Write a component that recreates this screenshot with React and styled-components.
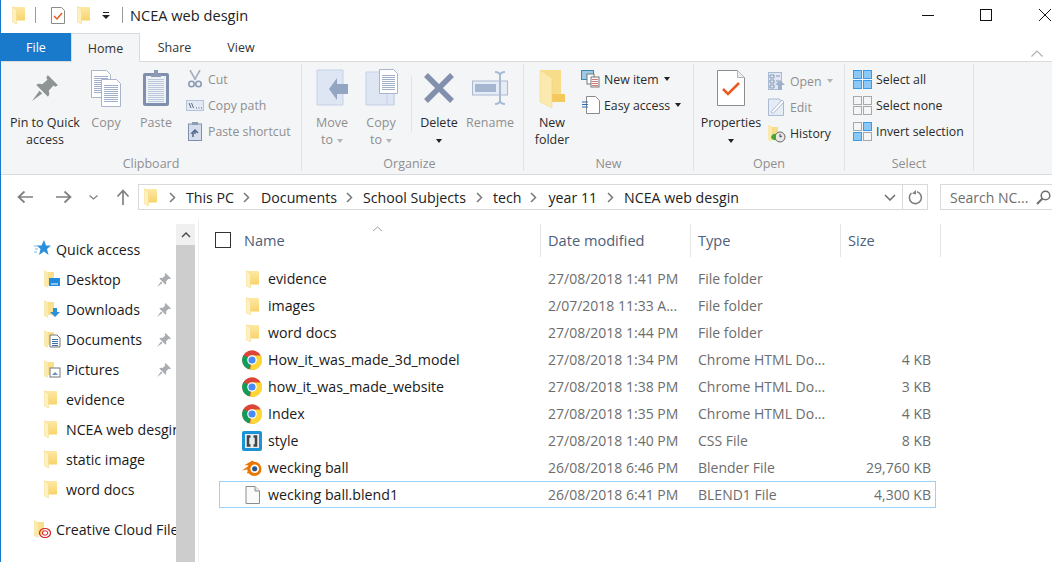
import React from 'react';
import styled, { createGlobalStyle } from 'styled-components';

const GlobalStyle = createGlobalStyle`
  html, body { margin: 0; padding: 0; background: #fff; }
  body { font-family: "Open Sans", "Noto Sans", sans-serif; }
  * { box-sizing: border-box; }
`;

const Win = styled.div`
  width: 1052px;
  height: 562px;
  overflow: hidden;
  border-left: 1px solid #1979ca;
  display: flex;
  flex-direction: column;
  color: #1a1a1a;
  font-size: 13.5px;
`;

const TitleBar = styled.div`
  height: 33px;
  display: flex;
  align-items: center;
  padding-left: 11px;
  padding-bottom: 3px;
  flex: none;
`;
const TitleSep = styled.div`
  width: 1px;
  height: 16px;
  background: #9a9a9a;
  margin: 0 ${p => p.$gap || 14}px;
`;
const TitleGap = styled.span`
  width: ${p => p.$w}px;
  flex: none;
`;
const TitleText = styled.div`
  font-size: 14.6px;
  color: #222;
  margin-left: -5px;
  flex: 1;
`;
const WinBtns = styled.div`
  display: flex;
  align-items: center;
  width: 131px;
  gap: 46px;
  margin-right: -1px;
  flex: none;
  svg:last-child { margin-left: 1px; }
`;

const Tabs = styled.div`
  height: 28px;
  display: flex;
  flex: none;
  position: relative;
  align-items: stretch;
`;
const Tab = styled.div`
  width: ${p => p.$w}px;
  display: flex;
  align-items: center;
  justify-content: center;
  font-size: 12.5px;
  padding-top: 1px;
  color: ${p => (p.$file ? '#fff' : '#333')};
  background: ${p => (p.$file ? '#1979ca' : p.$active ? '#f4f5f7' : 'transparent')};
  border: ${p => (p.$active ? '1px solid #dadbdc' : 'none')};
  border-bottom: none;
  margin-bottom: ${p => (p.$active ? '-1px' : '0')};
  z-index: 1;
`;
const Collapse = styled.div`
  position: absolute;
  right: 9px;
  top: 10px;
`;

const Ribbon = styled.div`
  height: 114px;
  flex: none;
  background: #f4f5f7;
  border-top: 1px solid #dadbdc;
  border-bottom: 1px solid #dadbdc;
  display: flex;
  padding-top: 2px;
`;
const Group = styled.div`
  width: ${p => p.$w}px;
  height: 107px;
  border-right: 1px solid #e1e3e6;
  display: flex;
  flex-direction: column;
  padding-left: ${p => p.$pad || 0}px;
`;
const GroupBody = styled.div`
  flex: 1;
  display: flex;
  align-items: flex-start;
  padding-top: 2px;
`;
const GroupLabel = styled.div`
  height: 16px;
  text-align: center;
  font-size: 12.5px;
  color: #8f8f8f;
  margin-left: -${p => p.$pad || 0}px;
  line-height: 17px;
  padding-right: ${p => p.$shift || 0}px;
`;
const Large = styled.div`
  width: ${p => p.$w}px;
  display: flex;
  flex-direction: column;
  align-items: center;
  flex: none;
  font-size: 12.5px;
  line-height: 17px;
  text-align: center;
  margin-left: ${p => p.$ml || 0}px;
  color: ${p => (p.$off ? '#8f8f8f' : '#2b2b2b')};
  white-space: nowrap;
`;
const LargeIcon = styled.div`
  height: 44px;
  margin-bottom: 4px;
  display: flex;
  align-items: center;
  justify-content: center;
`;
const LargeText = styled.div`
  text-align: center;
`;
const Caret = styled.span`
  display: inline-block;
  width: 0;
  height: 0;
  vertical-align: middle;
  margin-left: ${p => p.$ml ?? 4}px;
  border-left: 3.5px solid transparent;
  border-right: 3.5px solid transparent;
  border-top: 4px solid ${p => (p.$off ? '#b5b5b5' : '#222')};
`;
const VSep = styled.div`
  width: 1px;
  height: 56px;
  margin: 10px 0 0 5px;
  background: #e1e3e6;
  flex: none;
`;
const SmallCol = styled.div`
  display: flex;
  flex-direction: column;
  flex: none;
  margin-left: ${p => p.$ml || 0}px;
  padding-top: ${p => p.$pt || 0}px;
`;
const Small = styled.div`
  height: 26px;
  display: flex;
  align-items: center;
  gap: 4px;
  font-size: 12.3px;
  white-space: nowrap;
  color: ${p => (p.$off ? '#8f8f8f' : '#2b2b2b')};
`;
const SmallIcon = styled.span`
  width: 19px;
  height: 20px;
  display: flex;
  align-items: center;
  justify-content: center;
  flex: none;
`;

const AddressRow = styled.div`
  height: 44px;
  flex: none;
  display: flex;
  align-items: center;
  padding-left: 16px;
  color: #808080;
`;
const NavBtn = styled.div`
  width: ${p => p.$w}px;
  display: flex;
  align-items: center;
  flex: none;
`;
const AddressBox = styled.div`
  width: 790px;
  height: 26px;
  border: 1px solid #d9d9d9;
  display: flex;
  align-items: center;
  flex: none;
  padding-left: 5px;
  color: #222;
  font-size: 14.2px;
`;
const Crumb = styled.span`
  white-space: nowrap;
  margin-left: ${p => p.$ml}px;
`;
const Chev = styled.span`
  display: flex;
  margin-left: ${p => p.$ml}px;
`;
const AddrEnd = styled.div`
  margin-left: auto;
  display: flex;
  align-items: center;
  height: 100%;
  gap: 6px;
`;
const Refresh = styled.div`
  width: 25px;
  height: 100%;
  border-left: 1px solid #d9d9d9;
  display: flex;
  align-items: center;
  justify-content: center;
`;
const SearchBox = styled.div`
  flex: none;
  margin-left: 12px;
  width: 130px;
  height: 26px;
  border: 1px solid #d9d9d9;
  display: flex;
  align-items: center;
  padding-left: 9px;
  gap: 8px;
  font-size: 14px;
  color: #6d6d6d;
  white-space: nowrap;
  svg { flex: none; }
`;

const Main = styled.div`
  flex: 1;
  min-height: 0;
  display: flex;
`;
const Side = styled.div`
  width: 175px;
  flex: none;
  overflow: hidden;
  padding-top: 15px;
  font-size: 14.2px;
`;
const NavRow = styled.div`
  height: 30px;
  display: flex;
  align-items: center;
  padding-left: ${p => (p.$child ? 43 : 33)}px;
  margin-top: ${p => p.$mt || 0}px;
  position: relative;
  white-space: nowrap;
  color: #1a1a1a;
`;
const NavIcon = styled.span`
  width: 17px;
  height: 18px;
  display: flex;
  margin-right: 5px;
  flex: none;
`;
const NavPin = styled.span`
  position: absolute;
  left: 156px;
  top: 9px;
  display: flex;
`;
const Scroll = styled.div`
  width: 19px;
  flex: none;
  margin-top: 5px;
  background: #cdcdcd;
`;
const ScrollBtn = styled.div`
  height: 21px;
  background: #f0f0f0;
  display: flex;
  align-items: center;
  justify-content: center;
`;
const List = styled.div`
  flex: 1;
  margin-left: 3px;
  border-left: 1px solid #f0f0f0;
  min-width: 0;
  font-size: 14.2px;
  padding-top: 5px;
`;
const HeaderRow = styled.div`
  display: grid;
  grid-template-columns: 322px 150px 150px 100px;
  height: 33px;
  margin-left: 20px;
  position: relative;
  width: 722px;
  color: #4c607a;
  font-size: 14.6px;
`;
const HeadCell = styled.div`
  border-right: 1px solid #e5e5e5;
  display: flex;
  align-items: center;
  padding-left: ${p => p.$pl ?? 7}px;
  padding-bottom: 1px;
  height: 33px;
`;
const Check = styled.span`
  width: 16px;
  height: 16px;
  border: 1px solid #333;
  margin-right: 13px;
  margin-left: -4px;
  flex: none;
`;
const Sort = styled.span`
  position: absolute;
  left: 153px;
  top: 2px;
  display: flex;
`;
const Rows = styled.div`
  padding-top: 8px;
`;
const Row = styled.div`
  display: grid;
  grid-template-columns: 328px 150px 150px 87px;
  height: 27px;
  width: 717px;
  margin-left: 20px;
  align-items: center;
  border: 1px solid ${p => (p.$sel ? '#99d1ff' : 'transparent')};
  white-space: nowrap;
`;
const NameCell = styled.div`
  display: flex;
  align-items: center;
  padding-left: 22px;
`;
const RowIcon = styled.span`
  width: 20px;
  height: 20px;
  display: flex;
  align-items: center;
  justify-content: center;
  margin-right: 6px;
  flex: none;
`;
const Meta = styled.div`
  color: #6d6d6d;
  overflow: hidden;
  font-size: 14px;
`;
const SizeCell = styled(Meta)`
  text-align: right;
  padding-right: 4px;
`;

function Folder({ id = 'f' }) {
  return (
    <svg width="13" height="18" viewBox="0 0 13 18">
      <defs>
        <linearGradient id={id} x1="0" y1="0" x2="0" y2="1">
          <stop offset="0" stopColor="#fde9a4" />
          <stop offset="1" stopColor="#f8d36a" />
        </linearGradient>
      </defs>
      <path d="M1 1h11.500l.5 1v12.500H1Z" fill={`url(#${id})`} />
      <path d="M0 .5l4.500 3V18L0 15.500Z" fill="#fff0bf" stroke="#f0d687" strokeWidth=".5" />
    </svg>
  );
}

function BigFolder() {
  return (
    <svg width="27" height="40" viewBox="0 0 27 40">
      <path d="M2 2h20v32H2Z" fill="#f7dd8a" />
      <path d="M10 26h16v8H10Z" fill="#f4c95c" />
      <path d="M1 2l12 8v30L1 34Z" fill="#fbeab0" stroke="#efd27a" strokeWidth=".5" />
    </svg>
  );
}

function Chrome() {
  return (
    <svg width="20" height="20" viewBox="0 0 20 20">
      <circle cx="10" cy="10" r="9.800" fill="#db4437" />
      <path d="M10 10 L1.500 5 A9.800 9.800 0 0 0 7 19.300 Z" fill="#0f9d58" />
      <path d="M10 5.500h9A9.800 9.800 0 0 1 8 19.600L10 10Z" fill="#fdd835" />
      <circle cx="10" cy="10" r="4.800" fill="#fff" />
      <circle cx="10" cy="10" r="3.600" fill="#4a8af4" />
    </svg>
  );
}

function Brackets() {
  return (
    <svg width="20" height="20" viewBox="0 0 20 20">
      <rect width="20" height="20" rx="2" fill="#1a94d6" />
      <rect x="3" y="3" width="14" height="14" fill="#e8edf0" />
      <path d="M8.500 5.500H6v9h2.500M11.500 5.500H14v9h-2.500" fill="none" stroke="#444" strokeWidth="2.500" />
    </svg>
  );
}

function Blender() {
  return (
    <svg width="21" height="18" viewBox="0 0 21 18">
      <circle cx="13" cy="10" r="7.500" fill="#ea7600" />
      <path d="M0 11.500L8 6H2.500L11 1l3 3-6 10.500H5l2.500-4.500Z" fill="#ea7600" />
      <circle cx="13.300" cy="9.800" r="4.500" fill="#fff" />
      <circle cx="13.300" cy="9.800" r="2.700" fill="#24568c" />
    </svg>
  );
}

function Doc() {
  return (
    <svg width="15" height="18" viewBox="0 0 15 18">
      <path d="M1 .5h9l4.500 4.500v12.500H1Z" fill="#fafafa" stroke="#8c8c8c" />
      <path d="M10 .5V5h4.500" fill="#e8e8e8" stroke="#8c8c8c" />
    </svg>
  );
}

function Pin({ size = 14, color = '#a9acb0' }) {
  return (
    <svg width={size} height={size} viewBox="0 0 14 14">
      <path d="M8.500 0L14 5.500l-1.500.8-1-.6L9 8.500c.6 1.500.3 2.500-.4 3.200L2.300 5.400C3 4.700 4.200 4.400 5.500 5L8.300 2.500l-.6-1Z" fill={color} />
      <path d="M4 8.500L0 14l5.500-4Z" fill={color} />
    </svg>
  );
}

function Chevron({ color = '#7a7a7a' }) {
  return (
    <svg width="7" height="11" viewBox="0 0 7 11">
      <path d="M1 1l4.500 4.500L1 10" fill="none" stroke={color} strokeWidth="1.500" />
    </svg>
  );
}

function Arrow({ dir }) {
  const t = { left: 'rotate(180 8 8)', right: '', up: 'rotate(-90 8 8)' }[dir];
  return (
    <svg width="16" height="16" viewBox="0 0 16 16">
      <path d="M0 8h14M8.500 2.500L14.500 8l-6 5.500" fill="none" stroke="#808080" strokeWidth="1.700" transform={t} />
    </svg>
  );
}

function Lines({ x, y, w, n, gap = 2, color = '#9fb0c8' }) {
  const l = [];
  for (let i = 0; i < n; i++) l.push(<path key={i} d={`M${x} ${y + i * gap + .5}h${w}`} stroke={color} strokeWidth="1" />);
  return <>{l}</>;
}

function PageIcon({ x, y, w, h }) {
  return (
    <g>
      <path d={`M${x + .5} ${y + .5}h${w - 5}l4 4v${h - 4}h-${w - 1}Z`} fill="#fff" stroke="#a7b6cc" />
      <Lines x={x + 3} y={y + 6} w={w - 6} n={Math.floor((h - 8) / 2)} />
    </g>
  );
}

function CopyBig() {
  return (
    <svg width="32" height="38" viewBox="0 0 32 38">
      <PageIcon x={1} y={1} w={20} h={27} />
      <PageIcon x={11} y={10} w={20} h={27} />
    </svg>
  );
}

function PasteBig() {
  return (
    <svg width="28" height="38" viewBox="0 0 28 38">
      <rect x="1" y="4" width="26" height="33" rx="2" fill="#7f8fac" />
      <rect x="4" y="7" width="20" height="27" fill="#eef1f6" />
      <Lines x={6} y={10} w={16} n={12} gap={2} color="#bcc8dc" />
      <path d="M9 5h3V1h4v4h3v3H9Z" fill="#8c9ab3" />
    </svg>
  );
}

function MoveBig() {
  return (
    <svg width="33" height="38" viewBox="0 0 33 38">
      <path d="M1 1h26v35H1Z" fill="#dfe6f3" stroke="#c4d1e6" />
      <path d="M32 15v10H21v6L13 20l8-11v6Z" fill="#92a6c4" />
    </svg>
  );
}

function CopyToBig() {
  return (
    <svg width="33" height="38" viewBox="0 0 33 38">
      <path d="M1 3h28v33H1Z" fill="#dfe6f3" stroke="#c4d1e6" />
      <path d="M22 24v12M29 24v12" stroke="#c4d1e6" />
      <PageIcon x={14} y={0} w={19} h={24} />
    </svg>
  );
}

function DeleteBig() {
  return (
    <svg width="32" height="32" viewBox="0 0 32 32">
      <path d="M3 3l26 26M29 3L3 29" stroke="#8290ad" strokeWidth="5.500" fill="none" />
    </svg>
  );
}

function RenameBig() {
  return (
    <svg width="36" height="34" viewBox="0 0 36 34">
      <rect x=".5" y="10" width="35" height="14" fill="#e6ecf5" stroke="#a9bad3" />
      <rect x="3" y="13" width="21" height="8" fill="#a6b6d0" />
      <path d="M23 1c3 0 4.500 1 5 3v26c.5 2 2 3 5 3M33 1c-3 0-4.500 1-5 3M23 33c3 0 4.500-1 5-3" fill="none" stroke="#a9bad3" strokeWidth="2" />
    </svg>
  );
}

function PropsBig() {
  return (
    <svg width="28" height="36" viewBox="0 0 28 36">
      <path d="M.5.500h20l7 7v28H.500Z" fill="#fff" stroke="#8c8c8c" />
      <path d="M20.500.500v7h7" fill="#ededed" stroke="#b5b5b5" />
      <path d="M6 19l5 5L22 13" fill="none" stroke="#e95a1c" strokeWidth="2.500" />
    </svg>
  );
}

function Scissors() {
  return (
    <svg width="14" height="18" viewBox="0 0 14 18">
      <path d="M2 0l5.500 10M12 0L6.500 10" stroke="#a4afc0" strokeWidth="1.600" fill="none" />
      <circle cx="3.500" cy="14" r="2.700" fill="none" stroke="#8a9ab3" strokeWidth="1.600" />
      <circle cx="10.500" cy="14" r="2.700" fill="none" stroke="#8a9ab3" strokeWidth="1.600" />
    </svg>
  );
}

function CopyPath() {
  return (
    <svg width="18" height="11" viewBox="0 0 18 11">
      <rect x=".5" y=".5" width="17" height="10" fill="#e4eaf4" stroke="#b5c4da" />
      <path d="M3 3l2 5M5.500 3l2 5" stroke="#5b6b85" strokeWidth="1" />
      <path d="M10 8h1M12.500 8h1M15 8h1" stroke="#5b6b85" />
    </svg>
  );
}

function PasteShort() {
  return (
    <svg width="14" height="19" viewBox="0 0 14 19">
      <rect x=".5" y="2" width="13" height="16.500" fill="#d5deec" stroke="#7f8fac" />
      <path d="M4 3h6V0H4Z" fill="#8c9ab3" />
      <path d="M5 15v-4h-1l3-3 3 3M7 10v2" stroke="#53688a" strokeWidth="1.500" fill="none" />
    </svg>
  );
}

function NewItem() {
  return (
    <svg width="19" height="18" viewBox="0 0 19 18">
      <rect x=".5" y=".5" width="12" height="9" fill="#9dcbe6" stroke="#3a88b4" />
      <rect x="6" y="4" width="7" height="10" fill="#fff" stroke="#777" />
      <rect x="10" y="7" width="8" height="10" fill="#fff" stroke="#777" />
      <Lines x={11} y={9} w={6} n={4} color="#d47a7a" />
    </svg>
  );
}

function EasyAccess() {
  return (
    <svg width="18" height="18" viewBox="0 0 18 18">
      <path d="M4.500.500h9l4 4v13h-13Z" fill="#fff" stroke="#8a8a8a" />
      <path d="M0 6h6M0 8.500h6M0 11h6" stroke="#2a6fb0" />
    </svg>
  );
}

function OpenIcon() {
  return (
    <svg width="17" height="18" viewBox="0 0 17 18">
      <rect x=".5" y=".5" width="13" height="17" fill="#e0e7f2" stroke="#a9bad3" />
      <path d="M2 3h4v3H2ZM2 8h4v3H2ZM2 13h4v3H2ZM8 4h4M8 9h3" stroke="#8599ba" fill="none" />
      <path d="M12 8l5 5h-3v5h-4v-5H7Z" fill="#9fb0cb" />
    </svg>
  );
}

function EditIcon() {
  return (
    <svg width="17" height="18" viewBox="0 0 17 18">
      <path d="M.5 1h11l4 4v12.500H.500Z" fill="#e6ecf5" stroke="#a9bad3" />
      <path d="M3 14L14 2l2 2L5 15.500Z" fill="#fff" stroke="#a9bad3" />
    </svg>
  );
}

function HistoryIcon() {
  return (
    <svg width="18" height="19" viewBox="0 0 18 19">
      <path d="M0 1l4 2h6v13H0Z" fill="#f7dd8a" />
      <path d="M0 1l4 3v14l-4-2Z" fill="#fbeab0" />
      <circle cx="12" cy="13" r="5" fill="#e8e8e8" stroke="#666" />
      <path d="M12 10v3l2-1" stroke="#444" fill="none" />
      <path d="M3 13a4 4 0 0 1 5-3v6a4 4 0 0 1-5-3Z" fill="#46a832" />
    </svg>
  );
}

function SelectGrid({ on }) {
  const cells = [[0, 0], [10, 0], [0, 10], [10, 10]];
  return (
    <svg width="19" height="19" viewBox="0 0 19 19">
      {cells.map(([x, y], i) => (
        <rect
          key={i}
          x={x + .5}
          y={y + .5}
          width="8"
          height="8"
          fill={on[i] ? '#8cc8f5' : '#f4f5f7'}
          stroke={on[i] ? '#3a9be8' : '#a8a8a8'}
        />
      ))}
    </svg>
  );
}

function Star() {
  return (
    <svg width="17" height="16" viewBox="0 0 17 16">
      <path d="M10 0l2 5.500h5L13 9l1.500 6L10 11.500 5 15l1.500-6L3 5.500h4.500Z" fill="#2b8fdc" />
      <path d="M0 6h4M1 9h3M0 12h3" stroke="#7cbcec" />
    </svg>
  );
}

function Badged({ kind }) {
  return (
    <svg width="17" height="18" viewBox="0 0 17 18">
      <path d="M0 0l3 2h7v13H3L0 16Z" fill="#f9e08d" />
      <path d="M0 0l4 3v15l-4-2Z" fill="#fbeab0" />
      {kind === 'desktop' && <g><rect x="5" y="8" width="11" height="8" fill="#1f8ae0" /><path d="M7 14h7" stroke="#fff" /></g>}
      {kind === 'down' && <path d="M9 8h4v4h3l-5 5-5-5h3Z" fill="#2b8fdc" />}
      {kind === 'docs' && <g><path d="M6 5h7l3 3v9H6Z" fill="#fff" stroke="#777" /><Lines x={8} y={9} w={6} n={4} color="#3a70b0" /></g>}
      {kind === 'pics' && <g><rect x="6" y="8" width="10" height="9" fill="#fff" stroke="#777" /><path d="M8 15l3-3 3 3" fill="#5d93c7" /></g>}
      {kind === 'cc' && <g fill="none" stroke="#d8232a"><ellipse cx="11" cy="13" rx="5.500" ry="4.500" strokeWidth="1.200" /><ellipse cx="11" cy="13" rx="2.800" ry="2.200" /></g>}
    </svg>
  );
}

const nav = [
  { label: 'Desktop', kind: 'desktop', pin: true },
  { label: 'Downloads', kind: 'down', pin: true },
  { label: 'Documents', kind: 'docs', pin: true },
  { label: 'Pictures', kind: 'pics', pin: true },
  { label: 'evidence' },
  { label: 'NCEA web desgin' },
  { label: 'static image' },
  { label: 'word docs' },
];

const files = [
  { name: 'evidence', date: '27/08/2018 1:41 PM', type: 'File folder', icon: <Folder id="r1" /> },
  { name: 'images', date: '2/07/2018 11:33 A...', type: 'File folder', icon: <Folder id="r2" /> },
  { name: 'word docs', date: '27/08/2018 1:44 PM', type: 'File folder', icon: <Folder id="r3" /> },
  { name: 'How_it_was_made_3d_model', date: '27/08/2018 1:34 PM', type: 'Chrome HTML Do...', size: '4 KB', icon: <Chrome /> },
  { name: 'how_it_was_made_website', date: '27/08/2018 1:38 PM', type: 'Chrome HTML Do...', size: '3 KB', icon: <Chrome /> },
  { name: 'Index', date: '27/08/2018 1:35 PM', type: 'Chrome HTML Do...', size: '4 KB', icon: <Chrome /> },
  { name: 'style', date: '27/08/2018 1:40 PM', type: 'CSS File', size: '8 KB', icon: <Brackets /> },
  { name: 'wecking ball', date: '26/08/2018 6:46 PM', type: 'Blender File', size: '29,760 KB', icon: <Blender /> },
  { name: 'wecking ball.blend1', date: '26/08/2018 6:41 PM', type: 'BLEND1 File', size: '4,300 KB', icon: <Doc />, sel: true },
];

const crumbs = [
  ['This PC', 12, 10],
  ['Documents', 9, 11],
  ['School Subjects', 9, 10],
  ['tech', 10, 10],
  ['year 11', 9, 11],
  ['NCEA web desgin', 10, 10],
];

export default function App() {
  return (
    <>
      <GlobalStyle />
      <Win>
        <TitleBar>
          <Folder id="t1" />
          <TitleSep $gap={10} />
          <TitleGap $w={5} />
          <svg width="14" height="17" viewBox="0 0 14 17">
            <path d="M.5.500h10l3 3v13H.500Z" fill="#fff" stroke="#8c8c8c" />
            <path d="M3 9l3 3 5-6" fill="none" stroke="#e95a1c" strokeWidth="1.500" />
          </svg>
          <TitleGap $w={12} />
          <Folder id="t2" />
          <TitleGap $w={12} />
          <svg width="8" height="7" viewBox="0 0 8 7">
            <path d="M1 .500h6" stroke="#222" />
            <path d="M0 3h8L4 7Z" fill="#222" />
          </svg>
          <TitleSep $gap={12} />
          <TitleText>NCEA web desgin</TitleText>
          <WinBtns>
            <svg width="12" height="1" viewBox="0 0 12 1"><path d="M0 .5h12" stroke="#111" /></svg>
            <svg width="12" height="12" viewBox="0 0 12 12"><rect x=".5" y=".5" width="11" height="11" fill="none" stroke="#111" /></svg>
            <svg width="12" height="12" viewBox="0 0 12 12"><path d="M0 0l12 12M12 0L0 12" stroke="#111" /></svg>
          </WinBtns>
        </TitleBar>

        <Tabs>
          <Tab $file $w={70}>File</Tab>
          <Tab $active $w={69}>Home</Tab>
          <Tab $w={69}>Share</Tab>
          <Tab $w={64}>View</Tab>
          <Collapse>
            <svg width="12" height="7" viewBox="0 0 12 7"><path d="M.5 6.500L6 1l5.500 5.500" fill="none" stroke="#b0b0b0" strokeWidth="1.200" /></svg>
          </Collapse>
        </Tabs>

        <Ribbon>
          <Group $w={301} $pad={8}>
            <GroupBody>
              <Large $w={70} $ml={1}>
                <LargeIcon><Pin size={26} color="#8e9396" /></LargeIcon>
                <LargeText>Pin to Quick<br />access</LargeText>
              </Large>
              <Large $w={50} $off $ml={1}>
                <LargeIcon><CopyBig /></LargeIcon>
                <LargeText>Copy</LargeText>
              </Large>
              <Large $w={50} $off>
                <LargeIcon><PasteBig /></LargeIcon>
                <LargeText>Paste</LargeText>
              </Large>
              <SmallCol $ml={4}>
                <Small $off><SmallIcon><Scissors /></SmallIcon>Cut</Small>
                <Small $off><SmallIcon><CopyPath /></SmallIcon>Copy path</Small>
                <Small $off><SmallIcon><PasteShort /></SmallIcon>Paste shortcut</Small>
              </SmallCol>
            </GroupBody>
            <GroupLabel $pad={8}>Clipboard</GroupLabel>
          </Group>

          <Group $w={222} $pad={5}>
            <GroupBody>
              <Large $w={48} $off $ml={1}>
                <LargeIcon><MoveBig /></LargeIcon>
                <LargeText>Move<br />to<Caret $off /></LargeText>
              </Large>
              <Large $w={50} $off>
                <LargeIcon><CopyToBig /></LargeIcon>
                <LargeText>Copy<br />to<Caret $off /></LargeText>
              </Large>
              <VSep />
              <Large $w={54}>
                <LargeIcon><DeleteBig /></LargeIcon>
                <LargeText>Delete<br /><Caret $ml={0} /></LargeText>
              </Large>
              <Large $w={48} $off>
                <LargeIcon><RenameBig /></LargeIcon>
                <LargeText>Rename</LargeText>
              </Large>
            </GroupBody>
            <GroupLabel $pad={5} $shift={6}>Organize</GroupLabel>
          </Group>

          <Group $w={170} $pad={3}>
            <GroupBody>
              <Large $w={50}>
                <LargeIcon><BigFolder /></LargeIcon>
                <LargeText>New<br />folder</LargeText>
              </Large>
              <SmallCol $ml={4}>
                <Small><SmallIcon><NewItem /></SmallIcon>New item<Caret $ml={1} /></Small>
                <Small><SmallIcon><EasyAccess /></SmallIcon>Easy access<Caret $ml={1} /></Small>
              </SmallCol>
            </GroupBody>
            <GroupLabel $pad={3}>New</GroupLabel>
          </Group>

          <Group $w={151} $pad={2}>
            <GroupBody>
              <Large $w={68} $ml={1}>
                <LargeIcon><PropsBig /></LargeIcon>
                <LargeText>Properties<br /><Caret $ml={0} /></LargeText>
              </Large>
              <SmallCol $ml={2} $pt={2}>
                <Small $off><SmallIcon><OpenIcon /></SmallIcon>Open<Caret $off $ml={1} /></Small>
                <Small $off><SmallIcon><EditIcon /></SmallIcon>Edit</Small>
                <Small><SmallIcon><HistoryIcon /></SmallIcon>History</Small>
              </SmallCol>
            </GroupBody>
            <GroupLabel $pad={2}>Open</GroupLabel>
          </Group>

          <Group $w={129} $pad={8}>
            <GroupBody>
              <SmallCol>
                <Small><SmallIcon><SelectGrid on={[1, 1, 1, 1]} /></SmallIcon>Select all</Small>
                <Small><SmallIcon><SelectGrid on={[0, 0, 0, 0]} /></SmallIcon>Select none</Small>
                <Small><SmallIcon><SelectGrid on={[0, 1, 1, 0]} /></SmallIcon>Invert selection</Small>
              </SmallCol>
            </GroupBody>
            <GroupLabel $pad={8}>Select</GroupLabel>
          </Group>
        </Ribbon>

        <AddressRow>
          <NavBtn $w={39}><Arrow dir="left" /></NavBtn>
          <NavBtn $w={33}><Arrow dir="right" /></NavBtn>
          <NavBtn $w={26}>
            <svg width="9" height="5" viewBox="0 0 9 5"><path d="M.5.500L4.500 4 8.500.500" fill="none" stroke="#808080" strokeWidth="1.300" /></svg>
          </NavBtn>
          <NavBtn $w={23}><Arrow dir="up" /></NavBtn>
          <AddressBox>
            <Folder id="a1" />
            {crumbs.map(([label, a, b]) => (
              <React.Fragment key={label}>
                <Chev $ml={a}><Chevron /></Chev>
                <Crumb $ml={b}>{label}</Crumb>
              </React.Fragment>
            ))}
            <AddrEnd>
              <svg width="12" height="7" viewBox="0 0 12 7">
                <path d="M1 1l5 5 5-5" fill="none" stroke="#6d6d6d" strokeWidth="1.500" />
              </svg>
              <Refresh>
                <svg width="15" height="15" viewBox="0 0 15 15">
                  <path d="M9 1.800A6 6 0 1 1 3.500 3" fill="none" stroke="#808080" strokeWidth="1.600" />
                  <path d="M8 0v4.500l-4-1Z" fill="#808080" />
                </svg>
              </Refresh>
            </AddrEnd>
          </AddressBox>
          <SearchBox>
            Search NC...
            <svg width="15" height="15" viewBox="0 0 15 15">
              <circle cx="9.500" cy="5.500" r="4.300" fill="none" stroke="#6d6d6d" strokeWidth="1.500" />
              <path d="M6.500 8.500L1 14" stroke="#6d6d6d" strokeWidth="2" />
            </svg>
          </SearchBox>
        </AddressRow>

        <Main>
          <Side>
            <NavRow><NavIcon><Star /></NavIcon>Quick access</NavRow>
            {nav.map((n, i) => (
              <NavRow $child key={n.label}>
                <NavIcon>{n.kind ? <Badged kind={n.kind} /> : <Folder id={`n${i}`} />}</NavIcon>
                {n.label}
                {n.pin && <NavPin><Pin /></NavPin>}
              </NavRow>
            ))}
            <NavRow $mt={10}><NavIcon><Badged kind="cc" /></NavIcon>Creative Cloud Files</NavRow>
          </Side>
          <Scroll>
            <ScrollBtn>
              <svg width="10" height="6" viewBox="0 0 10 6"><path d="M1 5l4-4 4 4" fill="none" stroke="#505050" strokeWidth="1.500" /></svg>
            </ScrollBtn>
          </Scroll>
          <List>
            <HeaderRow>
              <HeadCell $pl={0}><Check />Name</HeadCell>
              <HeadCell>Date modified</HeadCell>
              <HeadCell>Type</HeadCell>
              <HeadCell>Size</HeadCell>
              <Sort>
                <svg width="11" height="6" viewBox="0 0 11 6"><path d="M1 5l4.500-4L10 5" fill="none" stroke="#a0a0a0" /></svg>
              </Sort>
            </HeaderRow>
            <Rows>
              {files.map(f => (
                <Row key={f.name} $sel={f.sel}>
                  <NameCell><RowIcon>{f.icon}</RowIcon>{f.name}</NameCell>
                  <Meta>{f.date}</Meta>
                  <Meta>{f.type}</Meta>
                  <SizeCell>{f.size}</SizeCell>
                </Row>
              ))}
            </Rows>
          </List>
        </Main>
      </Win>
    </>
  );
}
